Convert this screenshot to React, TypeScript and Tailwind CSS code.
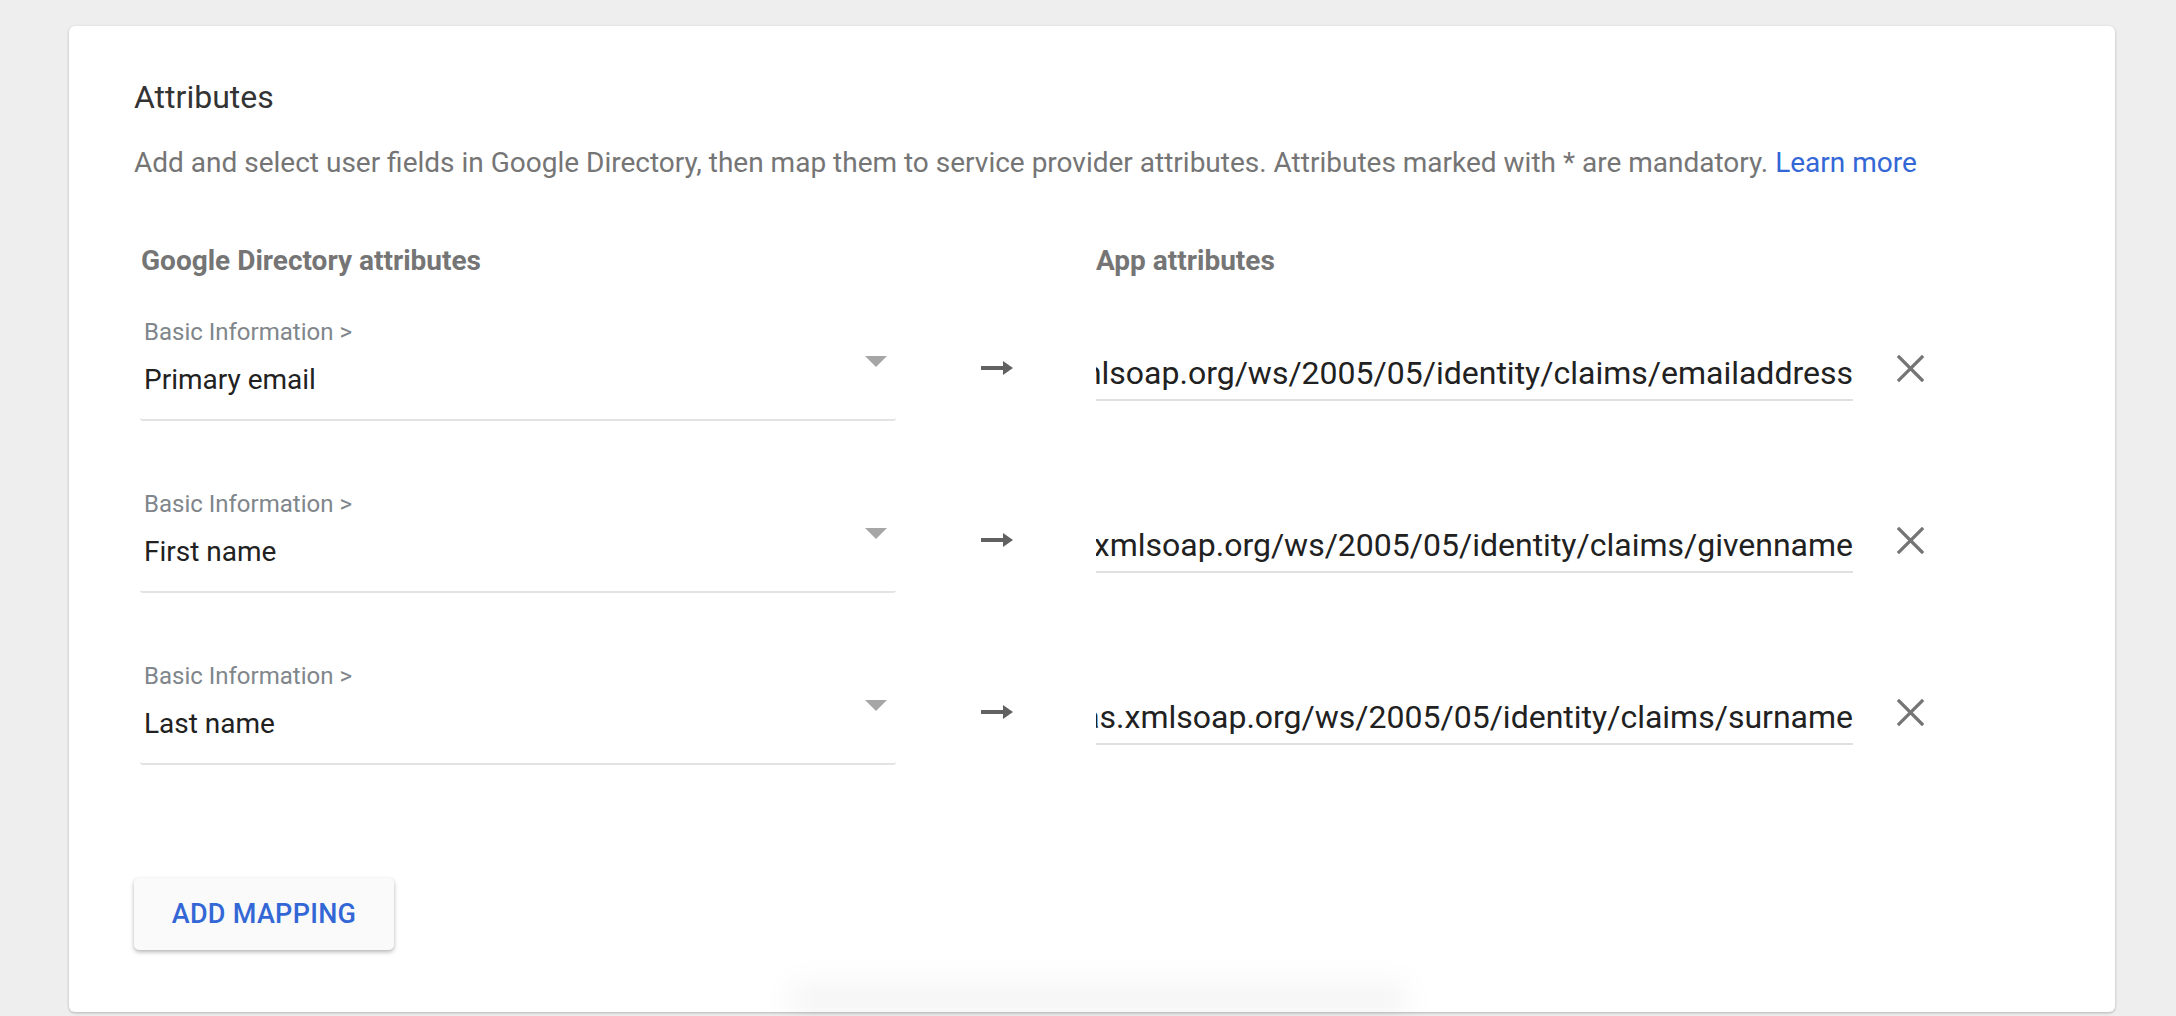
import React from "react";

const rows = [
  { field: "Primary email", attr: "http://schemas.xmlsoap.org/ws/2005/05/identity/claims/emailaddress" },
  { field: "First name", attr: "http://schemas.xmlsoap.org/ws/2005/05/identity/claims/givenname" },
  { field: "Last name", attr: "http://schemas.xmlsoap.org/ws/2005/05/identity/claims/surname" },
];

function ArrowRight() {
  return (
    <svg width="32" height="14" viewBox="0 0 32 14" className="block">
      <rect x="0" y="5" width="23" height="4" fill="#616161" />
      <path d="M22 0 L32 7 L22 14 Z" fill="#616161" />
    </svg>
  );
}

function CloseIcon() {
  return (
    <svg width="27" height="27" viewBox="0 0 27 27" className="block">
      <path d="M2 2 L25 25 M25 2 L2 25" stroke="#757575" strokeWidth="3.2" strokeLinecap="square" />
    </svg>
  );
}

function MappingRow({ field, attr }: { field: string; attr: string }) {
  return (
    <div className="flex items-start ml-[6px]">
      {/* Google Directory select */}
      <div className="w-[756px] flex items-start border-b-2 border-[#e3e3e3] rounded-b-[3px] pb-[25px] pl-[4px]">
        <div className="flex-1">
          <div className="text-[24px] leading-none text-[#80868b]">Basic Information &gt;</div>
          <div className="mt-[22px] text-[28px] leading-none text-[#212121]">{field}</div>
        </div>
        <svg width="22" height="11" viewBox="0 0 22 11" className="block mt-[36px] mr-[9px]">
          <path d="M0 0 L22 0 L11 11 Z" fill="#a6a6a6" />
        </svg>
      </div>

      <div className="ml-[85px] mt-[41px]">
        <ArrowRight />
      </div>

      {/* App attribute input */}
      <div className="ml-[83px] mt-[37px] w-[757px] border-b-2 border-[#e0e0e0] pb-[10px] overflow-hidden flex justify-end">
        <span className="whitespace-nowrap text-[32px] leading-none text-[#212121]">{attr}</span>
      </div>

      <button className="ml-[44px] mt-[35px]">
        <CloseIcon />
      </button>
    </div>
  );
}

export default function App() {
  return (
    <div className="h-[1016px] overflow-hidden bg-[#eeeeee] pt-[26px] pl-[69px]" style={{ fontFamily: "Roboto, 'Noto Sans', sans-serif" }}>
      <div className="relative w-[2046px] h-[986px] bg-white rounded-[6px] shadow-[0_1px_3px_rgba(0,0,0,0.25)] pl-[65px] pt-[55px]">
        <h2 className="text-[32px] leading-none text-[#333333] font-normal">Attributes</h2>
        <p className="mt-[36px] text-[28px] leading-none text-[#757575]">
          Add and select user fields in Google Directory, then map them to service provider attributes. Attributes marked with * are mandatory.{" "}
          <a className="text-[#3367d6]">Learn more</a>
        </p>

        {/* Column headers */}
        <div className="mt-[70px] flex text-[28px] leading-none font-bold text-[#757575]">
          <div className="ml-[7px] w-[955px]">Google Directory attributes</div>
          <div>App attributes</div>
        </div>

        <div className="mt-[45px] flex flex-col gap-[71px]">
          {rows.map((r) => (
            <MappingRow key={r.field} field={r.field} attr={r.attr} />
          ))}
        </div>

        <button className="mt-[113px] w-[260px] h-[72px] rounded-[5px] bg-[#fafafa] shadow-[0_2px_4px_rgba(0,0,0,0.3)] text-[27px] font-medium tracking-[0.3px] text-[#3367d6]">
          ADD MAPPING
        </button>

        {/* faint shadow of a floating bar below */}
        <div className="absolute left-[720px] bottom-[-6px] w-[620px] h-[36px] rounded-full bg-[#000000]/[0.04] blur-[14px]" />
      </div>
    </div>
  );
}
